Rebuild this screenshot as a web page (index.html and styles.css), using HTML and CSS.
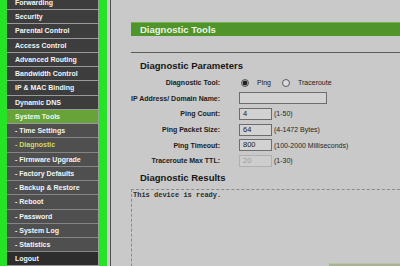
FILE: index.html
```html
<!DOCTYPE html>
<html lang="en">
<head>
    <meta charset="UTF-8">
    <title>Diagnostic Tools</title>
<link rel="stylesheet" href="styles.css">
</head>
<body>
    <div class="page">
        <nav class="sidebar">
            <ul class="menu">
                <li>Forwarding</li>
                <li>Security</li>
                <li>Parental Control</li>
                <li>Access Control</li>
                <li>Advanced Routing</li>
                <li>Bandwidth Control</li>
                <li>IP &amp; MAC Binding</li>
                <li>Dynamic DNS</li>
                <li class="active">System Tools</li>
                <li class="sub">- Time Settings</li>
                <li class="sub current">- Diagnostic</li>
                <li class="sub">- Firmware Upgrade</li>
                <li class="sub">- Factory Defaults</li>
                <li class="sub">- Backup &amp; Restore</li>
                <li class="sub">- Reboot</li>
                <li class="sub">- Password</li>
                <li class="sub">- System Log</li>
                <li class="sub">- Statistics</li>
                <li class="logout">Logout</li>
            </ul>
        </nav>
        <div class="gutter"></div>
        <main class="content">
            <div class="title-bar">Diagnostic Tools</div>
            <div class="rule"></div>
            <h2 class="section-title">Diagnostic Parameters</h2>
            <div class="params">
                <span class="label">Diagnostic Tool:</span>
                <span class="field">
                    <span class="radio checked"></span><span class="radio-text">Ping</span>
                    <span class="radio"></span><span class="radio-text">Traceroute</span>
                </span>

                <span class="label">IP Address/ Domain Name:</span>
                <span class="field"><span class="input wide"></span></span>

                <span class="label">Ping Count:</span>
                <span class="field"><span class="input">4</span><span class="hint">(1-50)</span></span>

                <span class="label">Ping Packet Size:</span>
                <span class="field"><span class="input">64</span><span class="hint">(4-1472 Bytes)</span></span>

                <span class="label">Ping Timeout:</span>
                <span class="field"><span class="input">800</span><span class="hint">(100-2000 Milliseconds)</span></span>

                <span class="label">Traceroute Max TTL:</span>
                <span class="field"><span class="input disabled">20</span><span class="hint">(1-30)</span></span>
            </div>
            <h2 class="section-title results-title">Diagnostic Results</h2>
            <div class="results">
                <pre>This device is ready.</pre>
                <div class="results-foot"><span class="foot-strip"></span></div>
            </div>
        </main>
    </div>
</body>
</html>
```

FILE: styles.css
```css
body {
    margin: 0;
    font-family: "Liberation Sans", Arial, sans-serif;
    background-color: #c9c9c9;
    overflow: hidden;
}

.page {
    display: flex;
    height: 100vh;
    overflow: hidden;
}

/* left menu with the bright highlight frame */
.sidebar {
    border-left: 7px solid #25e425;
    border-right: 8px solid #25e425;
    flex: none;
}

.menu {
    list-style: none;
    margin: -4px 0 0 0;
    padding: 0;
    width: 91px;
    border-right: 1px solid #9c9c9c;
}

.menu li {
    box-sizing: border-box;
    height: 14.24px;
    line-height: 13.24px;
    padding-left: 8px;
    border-bottom: 1px solid #9a9a9a;
    background-color: #3d3d3d;
    color: #f4f4f4;
    font-size: 7px;
    font-weight: bold;
    white-space: nowrap;
}

.menu li.active {
    background-color: #68a33a;
    color: #f3f9e8;
}

.menu li.sub {
    background-color: #4f4f4f;
    border-bottom-color: #858585;
}

.menu li.current {
    color: #cbdc62;
}

.menu li.logout {
    background-color: #2d2d2d;
}

.gutter {
    flex: none;
    width: 3px;
    background-color: #cdcdcd;
    border-right: 1px solid #4f4f4f;
}

.content {
    flex: 1;
    min-width: 0;
    padding: 22px 0 0 20px;
    color: #161616;
}

.title-bar {
    height: 14px;
    box-sizing: border-box;
    margin-right: -10px;
    padding-left: 9px;
    border-top: 1px solid #78b255;
    background-color: #4f952b;
    color: #eef3e8;
    font-size: 9.5px;
    font-weight: bold;
    line-height: 13px;
}

.rule {
    margin: 16px -10px 0 0;
    border-top: 1px solid #5c5c5c;
}

.section-title {
    margin: 7px 0 0 9px;
    font-size: 9.5px;
    line-height: 12px;
    font-weight: bold;
}

.params {
    display: grid;
    grid-template-columns: 89px auto;
    grid-auto-rows: 15.6px;
    column-gap: 19px;
    align-items: center;
    margin-top: 3px;
    font-size: 7px;
}

.label {
    text-align: right;
    font-weight: bold;
    white-space: nowrap;
    color: #1c1c1c;
}

.field {
    display: flex;
    align-items: center;
    white-space: nowrap;
}

.radio {
    box-sizing: border-box;
    width: 8px;
    height: 8px;
    margin-left: 2px;
    border: 1px solid #5a5a5a;
    border-radius: 50%;
    background-color: #dcdcdc;
}

.radio + .radio-text {
    margin-left: 8px;
}

.radio-text + .radio {
    margin-left: 11px;
}

.radio.checked {
    background: radial-gradient(circle, #1e1e1e 0 2px, #9a9a9a 2.5px);
}

.radio-text {
    color: #222;
}

.input {
    box-sizing: border-box;
    width: 33px;
    height: 12px;
    padding-left: 3px;
    border: 1px solid #6d6d6d;
    background-color: #d2d2d2;
    line-height: 10px;
    font-size: 7.5px;
    color: #1a1a1a;
}

.input.wide {
    width: 88px;
}

.input.disabled {
    border-color: #b0b0b0;
    color: #9c9c9c;
    background-color: #cdcdcd;
}

.hint {
    margin-left: 2px;
    color: #262626;
}

.results-title {
    margin-top: 3px;
}

.results {
    margin: 5px -20px 0 0;
    border: 1px dashed #8a8a8a;
    height: 120px;
}

.results pre {
    margin: 0;
    padding: 1px 1px 0;
    font-family: "Liberation Mono", "Courier New", monospace;
    font-size: 7px;
    font-weight: bold;
    line-height: 8px;
    color: #2e2e2e;
}

.results-foot {
    display: flex;
    justify-content: flex-end;
    margin-top: 64px;
}

.foot-strip {
    width: 90px;
    height: 12px;
    border-top: 1px solid #b9c4ab;
    background-color: #a6b395;
}
```
